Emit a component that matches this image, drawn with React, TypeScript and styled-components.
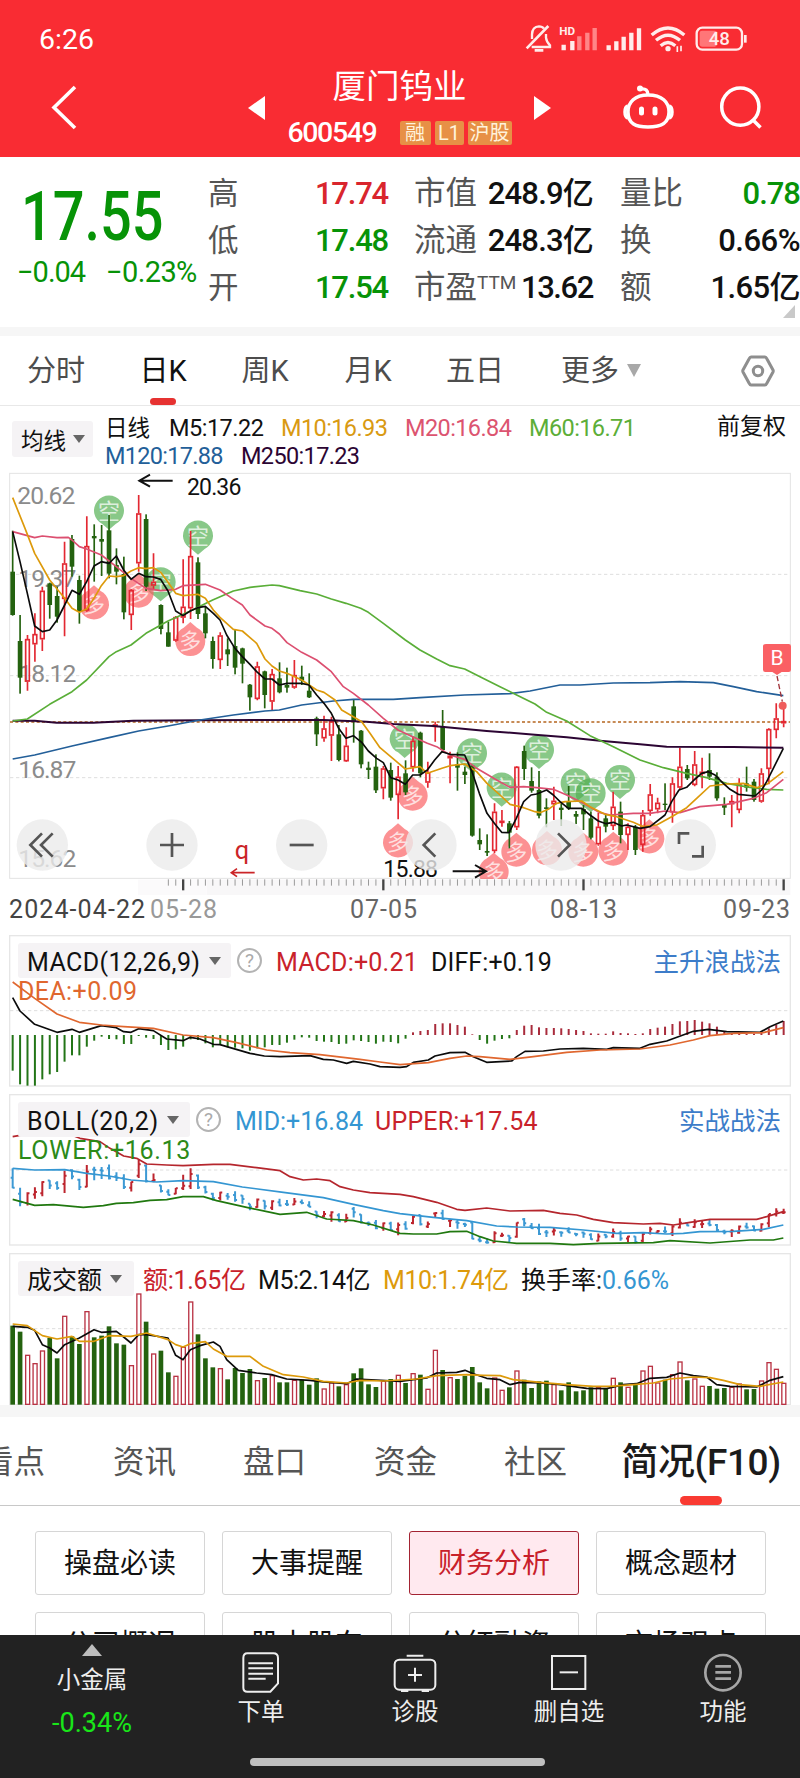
import React from "react";
import styled, { createGlobalStyle } from "styled-components";

const Global = createGlobalStyle`
  * { box-sizing: border-box; }
  body { margin: 0; background: #fff; }
`;

const RED = "#d9252d";
const UP = "#c9222b";
const GREEN = "#079307";
const FONT = `Roboto, "Noto Sans CJK SC", sans-serif`;

/* ---------- chart data: [up, high, bodyTop, bodyBottom, low], 3 units per pixel ---------- */
type Candle = [number, number, number, number, number];
const candles: Candle[] = [
  [0,197,320,450,452],[0,450,528,638,686],[1,510,522,650,677],[1,445,507,538,590],[1,365,377,523,558],
  [0,353,355,420,461],[0,365,393,455,473],[1,230,295,402,514],[0,210,222,305,335],[0,332,345,440,476],
  [1,154,243,437,440],[0,178,213,220,350],[0,180,222,230,333],[0,150,196,326,340],[0,250,300,320,358],
  [0,275,327,442,463],[1,373,375,450,495],[1,90,145,295,320],[0,148,162,365,378],[1,265,350,362,375],
  [0,418,420,492,508],[0,470,502,545,545],[1,453,456,527,530],[1,283,425,458,475],[1,198,273,430,462],
  [0,277,292,447,462],[0,425,445,505,520],[0,515,528,582,611],[1,502,511,585,612],[0,520,553,568,603],
  [0,495,543,608,628],[0,548,550,596,655],[0,657,659,697,737],[1,590,604,702,706],[0,617,619,690,730],
  [1,612,627,710,735],[0,592,640,682,685],[0,608,660,668,683],[1,585,630,668,671],[0,602,635,647,660],
  [0,625,677,697,699],[0,755,760,808,843],[1,752,790,820,830],[1,755,768,812,888],[0,780,808,885,889],
  [1,787,842,889,891],[0,702,724,770,833],[0,795,797,898,910],[0,890,908,915,942],[0,868,905,976,984],
  [1,903,910,970,1003],[0,893,915,998,1007],[1,903,935,990,1063],[0,886,925,982,990],[1,815,827,907,920],
  [0,800,803,925,937],[1,890,922,953,968],[1,770,778,786,830],[0,735,783,855,863],[1,860,872,880,955],
  [0,862,898,908,977],[0,905,920,930,957],[0,900,902,1112,1115],[0,1090,1125,1138,1155],[0,1108,1158,1163,1173],
  [1,1015,1040,1158,1165],[1,1035,1067,1073,1085],[0,1068,1075,1103,1150],[1,903,905,1087,1095],[0,842,858,912,945],
  [0,907,948,977,983],[0,918,975,1052,1060],[0,1000,1027,1032,1087],[1,965,1007,1018,1065],[0,1015,1028,1035,1083],
  [0,963,1010,1030,1035],[0,1038,1047,1055,1077],[0,1020,1032,1048,1095],[0,1040,1060,1118,1123],[1,1043,1085,1138,1142],
  [0,1050,1060,1085,1102],[1,980,1025,1083,1095],[0,1010,1040,1110,1135],[1,1075,1085,1110,1155],[0,1080,1085,1155,1170],
  [1,1035,1050,1140,1160],[1,957,988,1038,1052],[1,998,1013,1033,1045],[0,955,1016,1020,1035],[1,937,955,1042,1073],
  [1,848,905,968,975],[0,900,912,940,945],[1,858,898,960,964],[1,878,920,925,970],[0,865,915,935,945],
  [0,922,935,1000,1007],[0,997,1020,1028,1050],[1,990,1008,1018,1087],[1,940,955,1035,1045],[0,905,955,968,980],
  [0,942,950,1005,1010],[1,910,925,1010,1013],[1,790,792,912,958],[1,715,760,795,820],[1,722,768,775,787],
];
const volumes = [710,728,797,822,784,747,808,680,742,765,666,745,740,712,763,767,828,613,698,793,785,850,860,773,637,736,808,835,837,871,837,852,840,873,867,858,880,880,872,872,887,868,898,880,892,885,853,838,886,894,875,870,857,882,852,857,899,782,843,864,870,861,834,880,898,865,902,895,844,872,897,877,875,885,904,880,907,904,895,893,900,866,880,893,888,844,830,880,872,855,817,874,868,890,891,899,897,893,883,901,900,874,819,839,881];
const macd = [632,673,677,677,658,643,636,605,586,586,560,542,530,537,538,552,552,528,533,537,555,570,568,560,538,540,550,562,552,562,563,565,572,565,562,555,555,548,539,532,533,543,545,546,552,551,541,543,546,551,545,546,550,536,517,513,510,492,490,490,495,500,523,540,551,542,537,535,510,497,495,502,504,504,505,507,510,513,520,521,521,514,519,520,522,520,507,503,500,492,484,483,480,485,490,500,515,521,522,522,521,515,505,495,483];
const px = (i: number) => 38 + 22.24 * i;

const ma5 = "38,200 60,290 82,385 104,483 127,500 149,495 171,465 194,420 216,376 238,388 260,350 282,303 304,290 327,295 349,273 371,315 393,343 416,325 438,335 460,336 482,343 504,378 527,438 549,452 571,438 593,428 616,424 640,445 660,465 680,510 705,550 727,575 750,598 770,620 795,642 816,642 838,660 861,655 905,655 927,660 950,690 972,715 994,745 1016,790 1038,820 1060,812 1085,832 1105,858 1130,880 1150,893 1172,938 1194,945 1216,958 1238,930 1260,930 1282,915 1304,885 1326,860 1350,868 1394,870 1416,920 1438,985 1461,1045 1483,1075 1505,1102 1527,1103 1549,1060 1571,1010 1593,990 1610,987 1640,975 1660,990 1680,1010 1705,1030 1745,1030 1770,1050 1795,1068 1818,1076 1840,1072 1865,1083 1880,1080 1920,1090 1950,1085 1995,1050 2015,1010 2037,975 2060,967 2082,945 2105,925 2125,920 2145,930 2170,955 2190,973 2215,988 2265,993 2285,975 2300,950 2350,850";
const ma10 = "38,98 75,190 104,265 149,345 194,400 216,430 238,442 260,432 282,400 304,362 327,333 349,335 371,332 393,318 416,308 438,311 460,308 482,322 504,352 527,385 549,392 571,390 593,388 616,400 640,435 660,457 700,493 727,498 770,535 795,582 816,603 838,618 861,625 905,645 950,675 972,682 1005,705 1025,735 1060,755 1085,770 1110,805 1140,848 1172,875 1216,912 1260,905 1282,925 1326,910 1350,902 1394,897 1430,920 1461,955 1500,990 1530,1018 1571,1028 1605,1040 1620,1043 1645,1033 1670,1015 1695,1010 1745,1008 1770,1025 1815,1048 1850,1055 1900,1072 1930,1085 1970,1080 2015,1055 2060,1028 2090,1000 2130,963 2180,957 2230,955 2270,968 2300,958 2350,920";
const ma20 = "38,200 104,218 127,213 171,218 205,217 216,225 238,245 260,252 304,270 349,305 393,340 438,370 482,377 527,373 549,362 616,358 660,375 693,398 727,420 750,450 795,483 816,490 838,507 861,533 905,562 950,585 994,620 1030,665 1060,685 1105,720 1150,760 1194,795 1238,815 1282,835 1310,845 1350,870 1394,883 1430,910 1490,945 1530,967 1571,965 1610,968 1660,973 1700,990 1750,1015 1800,1043 1830,1050 1900,1045 1950,1045 1995,1038 2040,1043 2100,1025 2180,1018 2260,1000 2300,983 2350,943";
const ma60 = "38,768 82,762 149,718 216,680 260,645 327,575 349,560 393,540 438,505 504,468 571,438 638,405 700,378 750,367 816,360 838,362 900,377 950,387 994,402 1038,415 1082,430 1105,442 1150,475 1216,525 1260,555 1310,582 1350,602 1394,612 1440,635 1500,665 1550,690 1605,717 1640,742 1700,768 1770,812 1840,845 1920,885 1990,908 2060,925 2120,938 2180,955 2250,967 2300,973 2350,975";
const ma120 = "38,882 104,870 216,843 327,818 416,798 504,783 600,765 700,750 795,738 838,735 905,720 1000,708 1060,703 1180,703 1260,698 1394,690 1530,686 1590,678 1620,672 1680,660 1740,660 1840,654 1950,653 2040,650 2140,653 2200,665 2270,680 2350,692";
const ma250 = "38,767 104,767 170,773 280,773 400,767 600,766 820,765 970,765 1100,770 1180,777 1300,783 1460,798 1605,809 1700,817 1800,827 1920,838 2000,845 2200,846 2350,848";
const diff = "38,413 60,453 104,493 171,517 216,508 238,517 304,497 349,503 371,515 393,517 416,506 460,512 500,537 549,542 571,532 600,537 640,553 660,554 750,580 793,588 840,590 930,587 970,598 1000,600 1040,610 1060,604 1110,612 1140,620 1200,622 1220,620 1240,607 1285,600 1305,588 1350,578 1395,577 1420,590 1460,607 1535,603 1550,590 1575,574 1630,573 1680,567 1750,565 1820,568 1840,563 1920,565 1950,553 2000,543 2080,514 2125,508 2180,515 2280,517 2310,500 2350,483";
const dea = "38,366 104,415 171,462 238,487 304,495 371,500 460,505 549,525 640,533 710,548 800,570 870,578 960,584 1080,598 1140,606 1200,614 1285,608 1350,595 1400,588 1440,590 1530,598 1600,590 1700,577 1800,570 1920,567 2010,555 2080,540 2130,527 2200,520 2290,518 2350,503";
const upper = "38,140 60,136 216,136 240,145 300,155 330,175 371,198 410,205 440,222 500,225 549,227 640,223 690,223 770,233 840,242 870,260 910,270 950,267 990,272 1020,290 1060,300 1110,308 1200,313 1240,320 1310,337 1370,358 1395,361 1460,354 1530,363 1630,361 1680,370 1730,375 1780,388 1840,398 1930,402 1980,400 2020,405 2070,397 2130,388 2270,388 2300,380 2350,365";
const mid = "38,235 104,240 194,239 260,250 327,258 393,270 470,276 549,272 640,275 727,291 850,307 970,323 1060,343 1150,362 1200,371 1300,382 1400,392 1490,408 1550,411 1650,412 1750,420 1850,430 1930,428 2000,432 2050,430 2100,425 2200,424 2290,418 2350,405";
const lower = "38,328 104,346 160,344 250,352 310,347 349,340 400,338 450,331 500,329 549,320 610,320 650,332 740,352 840,373 920,367 980,387 1060,392 1120,405 1200,430 1240,432 1310,432 1350,425 1400,424 1440,440 1480,453 1550,460 1650,460 1720,464 1800,460 1960,458 2010,452 2130,459 2250,450 2320,450 2350,444";
const vol5 = "38,710 82,713 104,722 127,765 149,775 171,790 194,765 238,745 282,720 304,728 349,725 371,742 393,760 416,735 440,735 504,745 527,797 549,810 571,780 600,768 640,757 660,770 680,810 715,842 770,850 815,855 860,868 930,872 970,877 1040,882 1070,868 1200,875 1280,865 1310,850 1370,848 1395,842 1420,852 1460,866 1500,870 1530,885 1560,878 1620,880 1680,885 1760,896 1820,897 1870,885 1910,882 1950,866 2000,863 2040,850 2080,858 2120,862 2150,885 2190,890 2270,892 2310,872 2350,861";
const vol10 = "38,703 82,708 127,738 171,748 216,740 238,755 282,755 327,738 393,740 440,730 504,750 527,765 549,772 571,762 616,756 640,778 680,800 750,800 790,830 850,855 910,862 970,875 1040,880 1080,872 1150,874 1250,868 1310,858 1400,855 1450,857 1500,858 1540,870 1620,878 1700,885 1780,890 1830,890 1900,885 1960,880 2010,868 2080,862 2130,864 2170,872 2220,885 2280,890 2350,877";

const bears = [[327,137],[594,212],[482,352],[1214,822],[1416,865],[1505,968],[1617,855],[1727,955],[1772,985],[1860,945]];
const bulls = [[282,418],[416,383],[571,528],[1238,992],[1194,1132],[1481,1220],[1549,1160],[1641,1155],[1750,1160],[1840,1157],[1948,1120]];

/* ---------- layout parts ---------- */
const Screen = styled.div`
  width: 800px; height: 1778px; overflow: hidden; background: #fff;
  display: flex; flex-direction: column; font-family: ${FONT}; color: #111;
`;
const Txt = styled.span<{ $w?: number; $s: number; $c?: string; $ls?: number; $b?: number; $ml?: number }>`
  flex: none; white-space: nowrap; display: block;
  width: ${(p) => (p.$w ? `${p.$w}px` : "auto")};
  font-size: ${(p) => p.$s}px;
  color: ${(p) => p.$c || "inherit"};
  letter-spacing: ${(p) => p.$ls || 0}px;
  font-weight: ${(p) => p.$b || 400};
  margin-left: ${(p) => p.$ml || 0}px;
`;
const Header = styled.header`
  flex: none; height: 157px; background: #f92c33; color: #fff; display: flex; flex-direction: column;
`;
const StatusBar = styled.div`
  height: 60px; padding: 19px 52px 0 39px; display: flex; justify-content: space-between; align-items: flex-start; line-height: 41px;
  svg { margin-top: 4px; }
`;
const TitleBar = styled.div`
  height: 97px; display: flex; align-items: flex-start;
  > svg { flex: none; margin-top: 24px; }
`;
const Arrow = styled.i<{ $left?: boolean }>`
  flex: none; width: 0; height: 0; margin-top: 36px;
  border: 12px solid transparent;
  ${(p) => (p.$left ? "border-right: 17px solid #fff; border-left: 0;" : "border-left: 17px solid #fff; border-right: 0;")}
`;
const TitleBlock = styled.div`
  width: 269px; height: 97px; display: flex; flex-direction: column; align-items: center; line-height: 36px; padding-top: 9px;
`;
const CodeRow = styled.div`
  width: 224px; height: 30px; margin-top: 13px; display: flex; align-items: center; gap: 4px; line-height: 30px;
`;
const Badge = styled.span<{ $w: number }>`
  flex: none; width: ${(p) => p.$w}px; height: 24px; line-height: 24px; border-radius: 2px; text-align: center;
  background: #e79046; color: #fff3dc; font-size: 20px; white-space: nowrap;
`;
const Quote = styled.section`
  flex: none; height: 170px; display: flex; line-height: 47px; padding-top: 12px;
`;
const PriceCol = styled.div`width: 208px; padding-top: 12px; color: ${GREEN};`;
const Price = styled.div`
  margin-left: 21px; height: 71px; line-height: 72px; font-size: 69px; font-weight: 500;
  transform: scaleX(.81); transform-origin: left; white-space: nowrap;
`;
const Changes = styled.div`display: flex; line-height: 40px; padding-left: 17px;`;
const StatCol = styled.div<{ $w: number; $ml?: number }>`width: ${(p) => p.$w}px; margin-left: ${(p) => p.$ml || 0}px; padding-top: 1px;`;
const StatRow = styled.div`height: 47px; display: flex; justify-content: space-between; white-space: nowrap; sup { font-size: 19px; line-height: 1; vertical-align: 9px; }`;
const Corner = styled.i`align-self: flex-end; width: 0; height: 0; margin: 0 0 9px -17px; border-left: 12px solid transparent; border-bottom: 13px solid #c9c9c9;`;
const Band = styled.div<{ $h: number }>`flex: none; height: ${(p) => p.$h}px; background: #f6f6f6;`;
const PeriodTabs = styled.nav`
  flex: none; height: 70px; border-bottom: 1px solid #e8e8e8; display: flex; color: #4d4d4d; line-height: 71px; align-items: center;
  > svg { flex: none; margin-left: 100px; }
`;
const Tab = styled.div<{ $w: number; $ml: number; $active?: boolean }>`
  width: ${(p) => p.$w}px; margin-left: ${(p) => p.$ml}px; height: 69px; font-size: 29px; white-space: nowrap;
  color: ${(p) => (p.$active ? "#111" : "inherit")}; display: flex; flex-direction: column; align-items: center;
  &::after { content: ""; flex: none; width: 26px; height: 7px; border-radius: 4px; margin-top: -9px; background: ${(p) => (p.$active ? "#e63231" : "transparent")}; }
`;
const Down = styled.i<{ $c: string; $ml: number; $x?: number; $y?: number }>`
  flex: none; width: 0; height: 0; margin-left: ${(p) => p.$ml}px; align-self: center;
  border: ${(p) => p.$x || 6}px solid transparent; border-top: ${(p) => p.$y || 8}px solid ${(p) => p.$c}; border-bottom: 0;
`;
const MaLegend = styled.div`flex: none; height: 64px; display: flex; padding-left: 12px; white-space: nowrap;`;
const Picker = styled.div<{ $w: number; $h: number; $mt?: number }>`
  flex: none; width: ${(p) => p.$w}px; height: ${(p) => p.$h}px; margin-top: ${(p) => p.$mt || 0}px;
  border-radius: 3px; background: #f5f3f5; display: flex; align-items: center; padding-left: 9px;
`;
const MaRows = styled.div`flex: none; width: 612px; margin-left: 12px; padding-top: 8px; line-height: 28px;`;
const Adjust = styled.div`padding-top: 7px; line-height: 28px;`;
const Line = styled.div`display: flex; height: 28px;`;
const Stack = styled.div<{ $h: number }>`
  flex: none; height: ${(p) => p.$h}px; display: grid; grid-template-columns: 800px;
  > * { grid-area: 1 / 1; }
`;
const Dates = styled.div`
  display: flex; align-self: end; height: 52px; line-height: 53px; margin-left: 9px; color: #666;
`;
const Legend = styled.div`padding: 8px 19px 0 18px; height: 90px; line-height: 35px;`;
const LegendRow = styled.div`
  display: flex; align-items: center; height: 35px;
  ${Txt} { padding-top: 3px; }
`;
const LegendSecond = styled.div`height: 24px; line-height: 27px;`;
const Help = styled.span`
  flex: none; width: 25px; height: 25px; margin-left: 6px; border: 2px solid #b3b3b3; border-radius: 50%; color: #aaa; font-size: 19px; line-height: 22px; text-align: center;
`;
const Spacer = styled.div`flex: 1;`;
const SectionTabs = styled.nav`
  flex: none; height: 89px; border-bottom: 1px solid #c8c8c8; display: flex; line-height: 91px; color: #555;
`;
const Section = styled.div<{ $w: number; $ml: number; $active?: boolean }>`
  flex: none; width: ${(p) => p.$w}px; margin-left: ${(p) => p.$ml}px; height: 88px; white-space: nowrap;
  font-size: ${(p) => (p.$active ? 37 : 31.5)}px; color: ${(p) => (p.$active ? "#1b1b1b" : "inherit")}; font-weight: ${(p) => (p.$active ? 500 : 400)};
  letter-spacing: ${(p) => (p.$active ? -0.4 : 0)}px;
  display: flex; flex-direction: column; align-items: center;
  &::after { content: ""; flex: none; width: 42px; height: 9px; border-radius: 5px; margin-top: -12px; background: ${(p) => (p.$active ? "#f93a32" : "transparent")}; }
`;
const Cards = styled.div`
  flex: none; height: 129px; overflow: hidden; padding: 25px 34px 0 35px; display: grid; grid-template-columns: repeat(4, 170px);
  grid-auto-rows: 64px; column-gap: 17px; row-gap: 17px;
`;
const Card = styled.div<{ $active?: boolean }>`
  border: 1px solid ${(p) => (p.$active ? "#a32332" : "#d6d6d6")}; border-radius: 3px; text-align: center; line-height: 63px; font-size: 28px;
  background: ${(p) => (p.$active ? "#ffe9ef" : "#fff")}; color: ${(p) => (p.$active ? "#c8202a" : "#111")};
`;
const Bottom = styled.footer`flex: none; height: 143px; background: #222; color: #eee; display: flex; flex-direction: column; align-items: center;`;
const BottomRow = styled.div`width: 800px; height: 123px; display: flex;`;
const Sector = styled.div`width: 184px; display: flex; flex-direction: column; align-items: center; line-height: 43px;`;
const Up = styled.i`width: 0; height: 0; margin: 9px 0 3px; border: 10px solid transparent; border-top: 0; border-bottom: 12px solid #bdbdbd;`;
const Action = styled.div`
  width: 154px; display: flex; flex-direction: column; align-items: center; font-size: 23.5px; line-height: 32px; padding-top: 14px;
  svg { margin-bottom: 1px; }
`;
const HomeBar = styled.div`width: 295px; height: 8px; margin-right: 5px; border-radius: 4px; background: #c0c0c0;`;

/* ---------- charts ---------- */
const Poly = ({ pts, c, w = 5 }: { pts: string; c: string; w?: number }) => (
  <polyline points={pts} fill="none" stroke={c} strokeWidth={w} strokeLinejoin="round" />
);
const Grid = ({ y }: { y: number }) => (
  <line x1="30" x2="2370" y1={y} y2={y} stroke="#dedede" strokeWidth="3" strokeDasharray="10 8" />
);
const Pin = ({ x, y, bull }: { x: number; y: number; bull?: boolean }) => {
  const d = bull ? -1 : 1;
  return (
    <g>
      <path d={`M${x - 20} ${y + d * 40}L${x} ${y + d * 57}L${x + 20} ${y + d * 40}A45 45 0 1 ${bull ? 1 : 0} ${x - 20} ${y + d * 40}Z`}
        fill={bull ? "#fb5d60" : "#4fae50"} fillOpacity="0.68" />
      <text x={x} y={y + 24} fontSize="66" textAnchor="middle" fill="#fff" fillOpacity="0.72">{bull ? "多" : "空"}</text>
    </g>
  );
};
const Round = ({ x, children }: { x: number; children: React.ReactNode }) => (
  <g transform={`translate(${x} 1140)`}>
    <circle r="77" fill="#ebebeb" fillOpacity="0.8" />
    <g fill="none" stroke="#555" strokeWidth="8">{children}</g>
  </g>
);

const MainChart = () => (
  <svg width="800" height="425" viewBox="0 15 2400 1275" fontFamily={FONT}>
    <defs><clipPath id="plot"><rect x="28" y="25" width="2343" height="1217" /></clipPath></defs>
    <rect x="620" y="1244" width="1751" height="46" fill="#f8f7f8" />
    <rect x="414" y="1244" width="206" height="46" fill="#fbfafb" />
    <rect x="29" y="25" width="2342" height="1215" fill="#fff" stroke="#e3e3e3" strokeWidth="3" />
    <Grid y={328} /><Grid y={632} /><Grid y={938} />
    <g fontSize="74" fill="#8b8b8b" letterSpacing="-3">
      <text x="52" y="116">20.62</text><text x="55" y="367">19.37</text><text x="55" y="651">18.12</text>
      <text x="55" y="938">16.87</text><text x="55" y="1207">15.62</text>
    </g>
    <g clipPath="url(#plot)">
      {bears.map(([x, y]) => <Pin key={x} x={x} y={y} />)}
      {bulls.map(([x, y]) => <Pin key={x} x={x} y={y} bull />)}
    </g>
    <line x1="30" x2="2370" y1="771" y2="771" stroke="#b5651f" strokeWidth="4" strokeDasharray="9 7" />
    {candles.map(([u, h, t, b, l], i) => {
      const x = px(i);
      return u ? (
        <g key={i} stroke="#e32832" strokeWidth="5" fill="none">
          <path d={`M${x} ${h}V${t}M${x} ${b}V${l}`} />
          <rect x={x - 5.5} y={t + 2} width="11" height={Math.max(b - t - 4, 3)} />
        </g>
      ) : (
        <g key={i} fill="#24620f">
          <rect x={x - 2.5} y={h} width="5" height={l - h} />
          <rect x={x - 7} y={t} width="14" height={b - t} />
        </g>
      );
    })}
    <Poly pts={ma250} c="#2c0533" w={6} />
    <Poly pts={ma120} c="#235f99" />
    <Poly pts={ma60} c="#5aae38" />
    <Poly pts={ma20} c="#dc4f70" />
    <Poly pts={ma10} c="#dd9a0b" />
    <Poly pts={ma5} c="#0b0b0b" />
    <g fill="none" stroke="#111" strokeWidth="6">
      <path d="M518 47H418M450 29L418 47L450 65" />
      <path d="M1358 1219H1458M1425 1200L1458 1219L1425 1238" />
    </g>
    <g fontSize="69" fill="#111">
      <text x="561" y="91" textLength="163">20.36</text>
      <text x="1150" y="1236" textLength="164">15.88</text>
    </g>
    <text x="704" y="1182" fontSize="76" fill="#cb2528">q</text>
    <path d="M764 1223H694M711 1211L694 1223L711 1235" fill="none" stroke="#cb2528" strokeWidth="5" />
    <Round x={127}><path d="M-1 -35L-36 0L-1 35M31 -35L-4 0L31 35" /></Round>
    <Round x={516}><path d="M-36 0H36M0 -36V36" /></Round>
    <Round x={905}><path d="M-36 0H36" /></Round>
    <Round x={1293}><path d="M13 -35L-22 0L13 35" /></Round>
    <Round x={1683}><path d="M-9 -35L26 0L-9 35" /></Round>
    <Round x={2071}><path d="M-34 -3V-35H-3M37 2V34H5" /></Round>
    <path d="M2298 537H2366Q2373 537 2373 544V614Q2373 621 2366 621H2345L2331 630L2317 621H2296Q2289 621 2289 614V544Q2289 537 2298 537Z" fill="#fa6064" />
    <text x="2331" y="601" fontSize="63" textAnchor="middle" fill="#fff">B</text>
    <path d="M2331 633L2347 710" stroke="#a1333a" strokeWidth="4" strokeDasharray="16 8" />
    <circle cx="2348" cy="722" r="12" fill="#ef5c5c" />
    {Array.from({ length: 84 }, (_, k) => k + 21).map((i) => {
      const major = [23, 50, 77, 104].includes(i);
      return <line key={i} x1={px(i)} x2={px(i)} y1="1243" y2={major ? 1276 : 1262} stroke={major ? "#444" : "#999"} strokeWidth={major ? 7 : 3} />;
    })}
  </svg>
);

const Frame = ({ y, h }: { y: number; h: number }) => (
  <rect x="29" y={y} width="2342" height={h} fill="#fff" stroke="#e6e6e6" strokeWidth="4" />
);
const MacdChart = () => (
  <svg width="800" height="159" viewBox="0 225 2400 477">
    <Frame y={227} h={451} /><Grid y={452} />
    {macd.map((y, i) => <line key={i} x1={px(i)} x2={px(i)} y1="525" y2={y} stroke={y > 525 ? "#237517" : "#a92c3c"} strokeWidth="6" />)}
    <Poly pts={diff} c="#0b0b0b" /><Poly pts={dea} c="#e0672f" />
  </svg>
);
const BollChart = () => (
  <svg width="800" height="159" viewBox="0 12 2400 477">
    <Frame y={14} h={451} /><Grid y={240} />
    {candles.map(([u, h, t, b, l], i) => {
      const f = (v: number) => 210 + (v - 90) * 0.231;
      const x = px(i);
      return <path key={i} d={`M${x} ${f(h)}V${f(l) + 1}M${x} ${f(u ? b : t)}h-6M${x} ${f(u ? t : b)}h6`} stroke={u ? "#bd252e" : "#3c99d4"} strokeWidth="6" fill="none" />;
    })}
    <Poly pts={upper} c="#b5262d" /><Poly pts={mid} c="#3496d2" /><Poly pts={lower} c="#20780f" />
  </svg>
);
const VolumeChart = () => (
  <svg width="800" height="152" viewBox="0 490 2400 456">
    <Frame y={492} h={453} /><Grid y={717} />
    {volumes.map((y, i) => candles[i][0]
      ? <rect key={i} x={px(i) - 5.5} y={y} width="12" height={944 - y} fill="#fff" stroke="#b93344" strokeWidth="4" />
      : <rect key={i} x={px(i) - 7} y={y - 2} width="14" height={947 - y} fill="#24620f" />)}
    <Poly pts={vol5} c="#0b0b0b" /><Poly pts={vol10} c="#dd9a0b" />
  </svg>
);

/* ---------- icons ---------- */
const StatusIcons = () => (
  <svg width="223" height="32" viewBox="0 0 669 96" fill="none" stroke="#ffeceb" strokeWidth="7">
    <g transform="translate(-45 -9)">
      <path d="M66 57V43Q67 20 87 19Q97 19 102 26M108 42V53Q109 65 120 76V81H65" />
      <path d="M50 85L115 18M74 91H100" strokeWidth="8" />
      <text x="148" y="46" fontSize="35" fontWeight="700" fill="#ffeceb" stroke="none" fontFamily={FONT}>HD</text>
      <path d="M161 74V91M187 63V91" strokeWidth="13" />
      <path d="M208 49V91M232 38V91M254 24V91" strokeWidth="13" stroke="#ff8587" />
      <path d="M296 76V91M319 64V91M341 50V91M364 38V91M387 25V91" strokeWidth="13" />
      <path d="M425 45Q474 3 523 45M438 61Q474 30 510 61M452 77Q474 58 496 77" strokeWidth="10" />
      <circle cx="474" cy="86" r="8" fill="#ffeceb" stroke="none" />
      <path d="M502 79V96M513 77V94" strokeWidth="5" />
      <rect x="560" y="23" width="136" height="66" rx="17" />
      <rect x="569" y="32" width="52" height="48" rx="7" fill="#ff7678" stroke="none" />
      <path d="M706 45V68" strokeWidth="8" />
      <text x="628" y="76" textAnchor="middle" fontSize="56" fontWeight="500" fill="#ffeceb" stroke="none" fontFamily={FONT}>48</text>
    </g>
  </svg>
);

export default function App() {
  return (
    <>
      <Global />
      <Screen>
        <Header>
          <StatusBar><Txt $s={28.5}>6:26</Txt><StatusIcons /></StatusBar>
          <TitleBar>
            <svg width="248" height="50" viewBox="0 0 248 50" fill="none" stroke="#fff" strokeWidth="3.6"><path d="M75 3L54 23.5L75 44" /></svg>
            <Arrow $left />
            <TitleBlock>
              <Txt $s={33.5}>厦门钨业</Txt>
              <CodeRow>
                <Txt $s={28.5} $w={108} $ls={-1.4} $b={500}>600549</Txt>
                <Badge $w={31}>融</Badge><Badge $w={29}>L1</Badge><Badge $w={44}>沪股</Badge>
              </CodeRow>
            </TitleBlock>
            <Arrow />
            <svg width="249" height="56" viewBox="551 84 249 56" fill="none" stroke="#fff" strokeWidth="3.5">
              <path d="M648 95C662 95 669 102 669 112C669 124 660 127 648 127C636 127 628 124 628 112C628 102 635 95 648 95Z" />
              <path d="M628 106Q625 107 625 112Q625 117 628 118M669 106Q672 107 672 112Q672 117 669 118M648 95Q648 88 641 89" />
              <circle cx="640" cy="88.5" r="3" fill="#fff" stroke="none" />
              <path d="M641.5 109V113M655 109V113" strokeWidth="5" strokeLinecap="round" />
              <circle cx="740.3" cy="106.7" r="18.6" /><path d="M753 120L760.5 127.5" />
            </svg>
          </TitleBar>
        </Header>

        <Quote>
          <PriceCol>
            <Price>17.55</Price>
            <Changes><Txt $s={29} $w={89} $ls={-1}>−0.04</Txt><Txt $s={29} $ls={-0.6}>−0.23%</Txt></Changes>
          </PriceCol>
          <StatCol $w={180}>
            {[["高", "17.74", RED], ["低", "17.48", GREEN], ["开", "17.54", GREEN]].map(([l, v, c]) => (
              <StatRow key={l}><Txt $s={30.5} $c="#555">{l}</Txt><Txt $s={31} $b={500} $ls={-1.2} $c={c}>{v}</Txt></StatRow>
            ))}
          </StatCol>
          <StatCol $w={179} $ml={26}>
            <StatRow><Txt $s={31.5} $c="#555">市值</Txt><Txt $s={31} $b={500} $ls={-0.8}>248.9亿</Txt></StatRow>
            <StatRow><Txt $s={31.5} $c="#555">流通</Txt><Txt $s={31} $b={500} $ls={-0.8}>248.3亿</Txt></StatRow>
            <StatRow><Txt $s={31.5} $c="#555">市盈<sup>TTM</sup></Txt><Txt $s={31} $b={500} $ls={-1.4}>13.62</Txt></StatRow>
          </StatCol>
          <StatCol $w={180} $ml={27}>
            <StatRow><Txt $s={31.5} $c="#555">量比</Txt><Txt $s={31} $b={500} $ls={-1} $c={GREEN}>0.78</Txt></StatRow>
            <StatRow><Txt $s={31.5} $c="#555">换</Txt><Txt $s={31} $b={500} $ls={-0.5}>0.66%</Txt></StatRow>
            <StatRow><Txt $s={31.5} $c="#555">额</Txt><Txt $s={31} $b={500} $ls={-0.6}>1.65亿</Txt></StatRow>
          </StatCol>
          <Corner />
        </Quote>
        <Band $h={9} />

        <PeriodTabs>
          <Tab $w={60} $ml={26}>分时</Tab>
          <Tab $w={48} $ml={53} $active>日K</Tab>
          <Tab $w={48} $ml={54}>周K</Tab>
          <Tab $w={48} $ml={55}>月K</Tab>
          <Tab $w={60} $ml={53}>五日</Tab>
          <Tab $w={60} $ml={55}>更多</Tab>
          <Down $c="#a8a8a8" $ml={7} $x={7.5} $y={13} />
          <svg width="34" height="34" viewBox="0 0 34 34" fill="none" stroke="#8e8e8e" strokeWidth="3">
            <path d="M10 3H24Q25 3 26 5L32 16Q32.5 17 32 18L26 29Q25 31 24 31H10Q9 31 8 29L2 18Q1.5 17 2 16L8 5Q9 3 10 3Z" /><circle cx="17" cy="17" r="4.7" />
          </svg>
        </PeriodTabs>

        <MaLegend>
          <Picker $w={81} $h={36} $mt={15}><Txt $s={22.5}>均线</Txt><Down $c="#666" $ml={7} /></Picker>
          <MaRows>
            <Line>
              <Txt $s={22.5} $w={61}>日线</Txt>
              <Txt $s={23.5} $w={112} $ls={-0.5} $ml={3}>M5:17.22</Txt>
              <Txt $s={23.5} $w={124} $ls={-0.6} $c="#d99a12">M10:16.93</Txt>
              <Txt $s={23.5} $w={124} $ls={-0.6} $c="#dc5470">M20:16.84</Txt>
              <Txt $s={23.5} $ls={-0.6} $c="#5cae38">M60:16.71</Txt>
            </Line>
            <Line>
              <Txt $s={23.5} $w={136} $ls={-0.7} $c="#235f99">M120:17.88</Txt>
              <Txt $s={23.5} $ls={-0.65} $c="#2c0533">M250:17.23</Txt>
            </Line>
          </MaRows>
          <Adjust><Txt $s={23}>前复权</Txt></Adjust>
        </MaLegend>

        <Stack $h={465}>
          <MainChart />
          <Dates>
            <Txt $s={25} $w={141} $ls={1.1} $c="#444">2024-04-22</Txt>
            <Txt $s={25} $w={200} $ls={1} $c="#999">05-28</Txt>
            <Txt $s={25} $w={200} $ls={1}>07-05</Txt>
            <Txt $s={25} $w={173} $ls={1}>08-13</Txt>
            <Txt $s={25} $w={68} $ls={1}>09-23</Txt>
          </Dates>
        </Stack>

        <Stack $h={159}>
          <MacdChart />
          <Legend>
            <LegendRow>
              <Picker $w={213} $h={35}><Txt $s={25} $w={174} $ls={0.4}>MACD(12,26,9)</Txt><Down $c="#666" $ml={8} /></Picker>
              <Help>?</Help>
              <Txt $s={25} $w={155} $ml={14} $ls={0.2} $c={UP}>MACD:+0.21</Txt>
              <Txt $s={25} $ls={0.1}>DIFF:+0.19</Txt>
              <Spacer />
              <Txt $s={25.5} $c="#3c7cc9">主升浪战法</Txt>
            </LegendRow>
            <LegendSecond><Txt $s={25} $ls={0.4} $c="#e0672f">DEA:+0.09</Txt></LegendSecond>
          </Legend>
        </Stack>

        <Stack $h={159}>
          <BollChart />
          <Legend>
            <LegendRow>
              <Picker $w={172} $h={35}><Txt $s={25} $w={132} $ls={0.8}>BOLL(20,2)</Txt><Down $c="#666" $ml={8} /></Picker>
              <Help>?</Help>
              <Txt $s={25} $w={140} $ml={14} $c="#3496d2">MID:+16.84</Txt>
              <Txt $s={25} $ls={0.2} $c={UP}>UPPER:+17.54</Txt>
              <Spacer />
              <Txt $s={25.5} $c="#3c7cc9">实战战法</Txt>
            </LegendRow>
            <LegendSecond><Txt $s={25} $ls={0.7} $c="#2c8a18">LOWER:+16.13</Txt></LegendSecond>
          </Legend>
        </Stack>

        <Stack $h={152}>
          <VolumeChart />
          <Legend>
            <LegendRow>
              <Picker $w={116} $h={35}><Txt $s={25}>成交额</Txt><Down $c="#666" $ml={8} /></Picker>
              <Txt $s={25} $w={115} $ml={9} $ls={-0.3} $c={UP}>额:1.65亿</Txt>
              <Txt $s={25} $w={125} $ls={-0.45}>M5:2.14亿</Txt>
              <Txt $s={25} $w={138} $ls={-0.45} $c="#dd9a0b">M10:1.74亿</Txt>
              <Txt $s={25}>换手率:</Txt><Txt $s={25} $c="#3496d2">0.66%</Txt>
            </LegendRow>
          </Legend>
        </Stack>
        <Band $h={12} />

        <SectionTabs>
          <Section $w={63} $ml={-18}>看点</Section>
          <Section $w={63} $ml={68}>资讯</Section>
          <Section $w={63} $ml={67}>盘口</Section>
          <Section $w={63} $ml={68}>资金</Section>
          <Section $w={63} $ml={67}>社区</Section>
          <Section $w={162} $ml={53} $active>简况(F10)</Section>
        </SectionTabs>
        <Cards>
          <Card>操盘必读</Card><Card>大事提醒</Card><Card $active>财务分析</Card><Card>概念题材</Card>
          <Card>公司概况</Card><Card>股本股东</Card><Card>分红融资</Card><Card>市场观点</Card>
        </Cards>

        <Bottom>
          <BottomRow>
            <Sector><Up /><Txt $s={23.5}>小金属</Txt><Txt $s={27} $c="#19e619">-0.34%</Txt></Sector>
            <Action>
              <svg width="44" height="46" viewBox="0 0 132 138" fill="none" stroke="#eee" strokeWidth="6">
                <path d="M25 13H103Q117 13 117 27V103L94 128H25Q13 128 13 116V27Q13 13 25 13Z" /><path d="M28 43H102M28 58H102M28 74H102M28 89H80" />
              </svg>下单
            </Action>
            <Action>
              <svg width="44" height="46" viewBox="0 0 132 138" fill="none" stroke="#eee" strokeWidth="6">
                <rect x="5" y="32" width="122" height="90" rx="14" /><path d="M41 20H91M66 56V98M45 78H87M24 126H46M86 126H108" />
              </svg>诊股
            </Action>
            <Action>
              <svg width="44" height="46" viewBox="0 0 132 138" fill="none" stroke="#eee" strokeWidth="6">
                <rect x="15" y="21" width="100" height="99" /><path d="M38 70H93" />
              </svg>删自选
            </Action>
            <Action>
              <svg width="44" height="46" viewBox="0 0 132 138" fill="none" stroke="#a6a6a6" strokeWidth="8">
                <circle cx="66" cy="71" r="53" /><path d="M43 52H90M43 70H90M43 89H90" />
              </svg>功能
            </Action>
          </BottomRow>
          <HomeBar />
        </Bottom>
      </Screen>
    </>
  );
}
